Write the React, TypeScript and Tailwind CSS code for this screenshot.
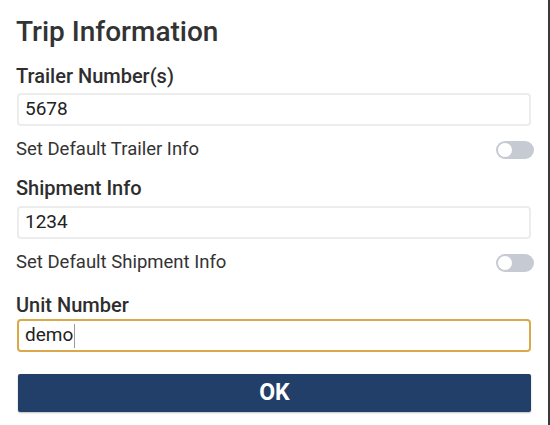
import { useState } from "react";

function Toggle() {
  return (
    <div className="relative h-[18px] w-[38px] shrink-0 rounded-full bg-[#c5cad3]">
      <div className="absolute left-[1px] top-[1px] h-[16px] w-[16px] rounded-full border border-[#c5cad3] bg-white" />
    </div>
  );
}

function Field({
  value,
  focused,
}: {
  value: string;
  focused?: boolean;
}) {
  return (
    <div
      className={
        focused
          ? "flex h-[33px] items-center rounded-[4px] border-2 border-[#dba94b] px-[6px] text-[19px] text-[#222]"
          : "flex h-[33px] items-center rounded-[4px] border-2 border-[#ececec] px-[6px] text-[19px] text-[#222]"
      }
    >
      <span>{value}</span>
      {focused && <span className="ml-[1px] h-[24px] w-[1px] bg-[#999]" />}
    </div>
  );
}

export default function App() {
  const [unit] = useState("demo");

  return (
    <div
      className="h-[425px] w-[550px] border-r-2 border-[#3a3a3a] bg-white pl-4 pr-[14px] pt-4"
      style={{ fontFamily: "Roboto, 'Noto Sans', sans-serif" }}
    >
      <h1 className="text-[28px] font-medium leading-[32px] text-[#333]">
        Trip Information
      </h1>

      <div className="mt-[16px] text-[20px] font-medium leading-[24px] text-[#2e2e2e]">
        Trailer Number(s)
      </div>
      <div className="mt-[5px] pl-[1px] pr-[3px]">
        <Field value="5678" />
      </div>
      <div className="mt-[10px] flex h-[28px] items-center justify-between">
        <span className="text-[18.5px] text-[#333]">Set Default Trailer Info</span>
        <Toggle />
      </div>

      <div className="mt-[12px] text-[20px] font-medium leading-[24px] text-[#2e2e2e]">
        Shipment Info
      </div>
      <div className="mt-[6px] pl-[1px] pr-[3px]">
        <Field value="1234" />
      </div>
      <div className="mt-[10px] flex h-[28px] items-center justify-between">
        <span className="text-[18.5px] text-[#333]">Set Default Shipment Info</span>
        <Toggle />
      </div>

      <div className="mt-[16px] text-[20px] font-medium leading-[24px] text-[#2e2e2e]">
        Unit Number
      </div>
      <div className="mt-[2px] pl-[1px] pr-[3px]">
        <Field value={unit} focused />
      </div>

      <button className="mt-[22px] ml-[2px] flex h-[38px] w-[513px] items-center justify-center rounded-[2px] bg-[#213f68] text-[23px] font-bold text-white shadow-[0_1px_2px_rgba(0,0,0,0.25)]">
        OK
      </button>
    </div>
  );
}
